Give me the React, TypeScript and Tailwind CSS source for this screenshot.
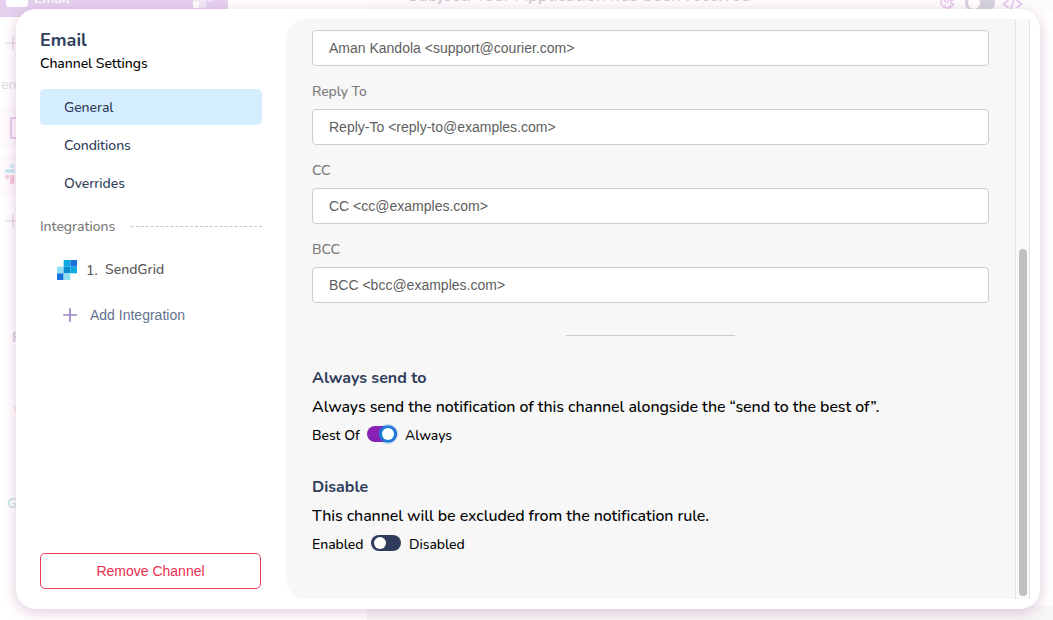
import React from "react";

const sans = "font-['Nunito','Lato',sans-serif]";
const arial = "font-['Liberation_Sans',Arial,sans-serif]";

function Plus({ className }: { className: string }) {
  return (
    <svg className={className} viewBox="0 0 14 14" fill="none" stroke="currentColor" strokeWidth="1.7">
      <path d="M7 0.2V13.8M0.2 7H13.8" />
    </svg>
  );
}

function SendGridLogo({ className, colors }: { className: string; colors: string[] }) {
  return (
    <svg className={className} viewBox="0 0 3 3">
      <path d="M1 0h1v1H1z" fill={colors[0]} />
      <path d="M2 0h1v1H2z" fill={colors[1]} />
      <path d="M0 1h1v1H0z" fill={colors[2]} />
      <path d="M1 1h1v1H1z" fill={colors[3]} />
      <path d="M2 1h1v1H2z" fill={colors[0]} />
      <path d="M0 2h1v1H0z" fill={colors[1]} />
      <path d="M1 2h1v1H1z" fill={colors[2]} />
    </svg>
  );
}

function Backdrop() {
  return (
    <div className="absolute inset-0 overflow-hidden bg-white">
      <div className="absolute left-0 top-0 h-[17px] w-[228px] bg-[#e5d0ee]" />
      <div className="absolute left-[6px] top-[-14px] h-[21px] w-[22px] rounded-[3px] bg-white" />
      <div className="absolute left-[34px] top-[-9px] text-[14px] leading-[16px] font-semibold text-white">Email</div>
      <SendGridLogo
        className="absolute left-[193px] top-[-12px] h-[20px] w-[20px]"
        colors={["#f2e8f7", "#ffffff", "#f2e8f7", "#f8f2fa"]}
      />
      <div className="absolute left-[367px] top-0 h-[10px] w-[686px] bg-[#fdfcfd]" />
      <div className="absolute left-[408px] top-[-12px] text-[16px] leading-[16px] font-semibold tracking-[0.6px] whitespace-nowrap text-[#c9c9cd]">
        Subject: Your Application has been received
      </div>
      <svg className="absolute left-[940px] top-[-6px] h-[15px] w-[15px]" viewBox="0 0 15 15" fill="none" stroke="#e3c9ed" strokeWidth="1.5">
        <path d="M10 1.500A6.500 6.500 0 1 0 13.500 10L11 9.500 10.500 7 13.500 5.500M4 6l2 2M9 4.500l-2 5M5 11h1M9 12h2" />
      </svg>
      <div className="absolute left-[965px] top-[-5px] h-[16px] w-[30px] rounded-full bg-[#d4d4dc]">
        <div className="ml-[3px] mt-[2px] h-[12px] w-[12px] rounded-full bg-white" />
      </div>
      <svg className="absolute left-[1002px] top-[-2px] h-[12px] w-[21px]" viewBox="0 0 21 12" fill="none" stroke="#e3c9ed" strokeWidth="1.7">
        <path d="M6.500 2L1.500 6l5 4M14.500 2l5 4-5 4M12.500 0L8.500 12" />
      </svg>
      <Plus className="absolute left-[6px] top-[36px] h-[14px] w-[14px] text-[#e6e0ef]" />
      <div className="absolute left-[1px] top-[77px] text-[14px] leading-[16px] text-[#d9dadd]">en</div>
      <div className="absolute left-0 top-[107px] h-[40px] w-[40px] bg-[#fdfbfe]" />
      <div className="absolute left-[10px] top-[117px] h-[22px] w-[20px] rounded-[3px] border-2 border-[#e3c9ed]" />
      <div className="absolute left-0 top-[155px] h-[40px] w-[40px] bg-[#fdfbfe]" />
      <svg className="absolute left-[5px] top-[164px] h-[20px] w-[20px]" viewBox="0 0 20 20">
        <path d="M7 0a2 2 0 0 1 2 2v2H7a2 2 0 0 1 0-4zM2 5h6a2 2 0 0 1 0 4H2a2 2 0 0 1 0-4z" fill="#caeaf5" />
        <path d="M2 11h2v2a2 2 0 1 1-2-2zM5 13a2.200 2.200 0 0 1 4.400 0v5a2.200 2.200 0 0 1-4.400 0z" fill="#f5c9d9" />
        <path d="M11 0h6v9h-6z" fill="#ccebdc" />
      </svg>
      <Plus className="absolute left-[6px] top-[214px] h-[14px] w-[14px] text-[#e6e0ef]" />
      <div className="absolute left-[12px] top-[330px] text-[14px] leading-[16px] font-bold text-[#d4d3da]">R</div>
      <div className="absolute left-[13px] top-[403px] text-[14px] leading-[16px] text-[#dddde0]">V</div>
      <div className="absolute left-[7px] top-[496px] text-[14px] leading-[16px] font-bold text-[#c8ebe6]">G</div>
      <div className="absolute left-[367px] top-[606px] h-[14px] w-[686px] bg-[#f6f6f6]" />
    </div>
  );
}

function Field({ label, value }: { label?: string; value: string }) {
  return (
    <div className="flex flex-col">
      {label && (
        <div className="flex h-[43px] items-center pt-[7px] text-[14px] font-medium tracking-[-0.06px] text-[#7a7a7a]">
          {label}
        </div>
      )}
      <div className={`${arial} flex h-[36px] items-center rounded border border-[#cccccc] bg-white px-4 text-[14px] text-[#5e5e5e]`}>
        {value}
      </div>
    </div>
  );
}

function Toggle({ on }: { on?: boolean }) {
  return on ? (
    <span className="relative -top-px flex h-4 w-[30px] items-center justify-end rounded-full bg-[#8721b5] pr-[3px]">
      <span className="h-3 w-3 rounded-full bg-white shadow-[0_0_2px_3px_#1684dc]" />
    </span>
  ) : (
    <span className="relative -top-px flex h-4 w-[30px] items-center rounded-full bg-[#2f3c5b] pl-[3px]">
      <span className="h-3 w-3 rounded-full bg-white" />
    </span>
  );
}

export default function App() {
  return (
    <div className={`${sans} relative h-[620px] w-[1053px] overflow-hidden`}>
      <Backdrop />
      <div className="relative flex h-full w-full pt-[9px] pl-4">
        <div className="flex h-[600px] w-[1024px] rounded-[20px] bg-white py-[10px] pr-[10px] shadow-[0_3px_14px_rgba(150,50,120,0.26)]">
          <aside className="flex w-[270px] shrink-0 flex-col pb-[10px] pl-6 pr-6 pt-[9px]">
            <h1 className="text-[18px] leading-6 font-bold text-[#2f3c5b]">Email</h1>
            <p className="mt-[2px] text-[14px] leading-5 font-medium tracking-[-0.06px] text-black">Channel Settings</p>
            <nav className="mt-[15px] flex flex-col gap-[2px] text-[14px] font-medium tracking-[-0.06px] text-[#2f3c5b]">
              <span className="flex h-9 items-center rounded-[5px] bg-[#d5eefe] pl-6">General</span>
              <span className="flex h-9 items-center pl-6">Conditions</span>
              <span className="flex h-9 items-center pl-6">Overrides</span>
            </nav>
            <div className="mt-[15px] flex h-5 items-center gap-4 text-[14px] font-medium tracking-[-0.06px] text-[#7a7a7a]">
              <span className="w-[75px]">Integrations</span>
              <svg className="h-px flex-1" preserveAspectRatio="none">
                <path d="M0 .5H131" stroke="#c7c7c7" strokeDasharray="3 1.920" />
              </svg>
            </div>
            <div className="mt-[22px] flex h-6 items-center pl-[17px] text-[14px] font-medium text-[#555555]">
              <SendGridLogo className="h-5 w-5" colors={["#10a8e0", "#1a73dd", "#93dff2", "#0c8cd0"]} />
              <span className="ml-[9px] w-[19px]">1.</span>
              <span className="relative -top-px">SendGrid</span>
            </div>
            <div className={`${arial} mt-[21px] flex h-6 items-center pl-[23px] text-[14px] text-[#647190]`}>
              <Plus className="h-[14px] w-[14px] text-[#9b86c4]" />
              <span className="ml-[13px]">Add Integration</span>
            </div>
            <button className={`${arial} mt-auto h-9 w-[221px] rounded-[5px] border border-[#ea3c5e] text-[14px] text-[#ea3050]`}>
              Remove Channel
            </button>
          </aside>
          <main className="flex min-w-0 flex-1 overflow-hidden rounded-l-[20px] bg-[#f7f7f7]">
            <div className="flex w-[729px] flex-col pl-[26px] pr-[26px] pt-[11px]">
              <Field value="Aman Kandola <support@courier.com>" />
              <Field label="Reply To" value="Reply-To <reply-to@examples.com>" />
              <Field label="CC" value="CC <cc@examples.com>" />
              <Field label="BCC" value="BCC <bcc@examples.com>" />
              <div className="mt-8 h-px w-[169px] self-center bg-[#cccccc]" />
              <section className="mt-[30px] h-[109px] text-black">
                <h2 className="text-[16px] leading-6 font-bold text-[#2f3c5b]">Always send to</h2>
                <p className="mt-[5px] text-[16px] leading-6 font-medium tracking-[-0.075px] whitespace-nowrap">
                  Always send the notification of this channel alongside the “send to the best of”.
                </p>
                <div className="mt-[6px] flex h-5 items-center text-[14px] font-medium tracking-[-0.04px]">
                  <span className="w-[55px]">Best Of</span>
                  <Toggle on />
                  <span className="ml-2">Always</span>
                </div>
              </section>
              <section className="text-black">
                <h2 className="text-[16px] leading-6 font-bold text-[#2f3c5b]">Disable</h2>
                <p className="mt-[5px] text-[16px] leading-6 font-medium tracking-[-0.075px] whitespace-nowrap">
                  This channel will be excluded from the notification rule.
                </p>
                <div className="mt-[6px] flex h-5 items-center text-[14px] font-medium tracking-[-0.04px]">
                  <span className="w-[59px]">Enabled</span>
                  <Toggle />
                  <span className="ml-2">Disabled</span>
                </div>
              </section>
            </div>
            <div className="flex w-[15px] flex-col items-center border-x border-[#e3e3e3] bg-[#f9f9f9] pt-[230px]">
              <div className="h-[347px] w-2 rounded-full bg-[#c0c0c0]" />
            </div>
          </main>
        </div>
      </div>
    </div>
  );
}
